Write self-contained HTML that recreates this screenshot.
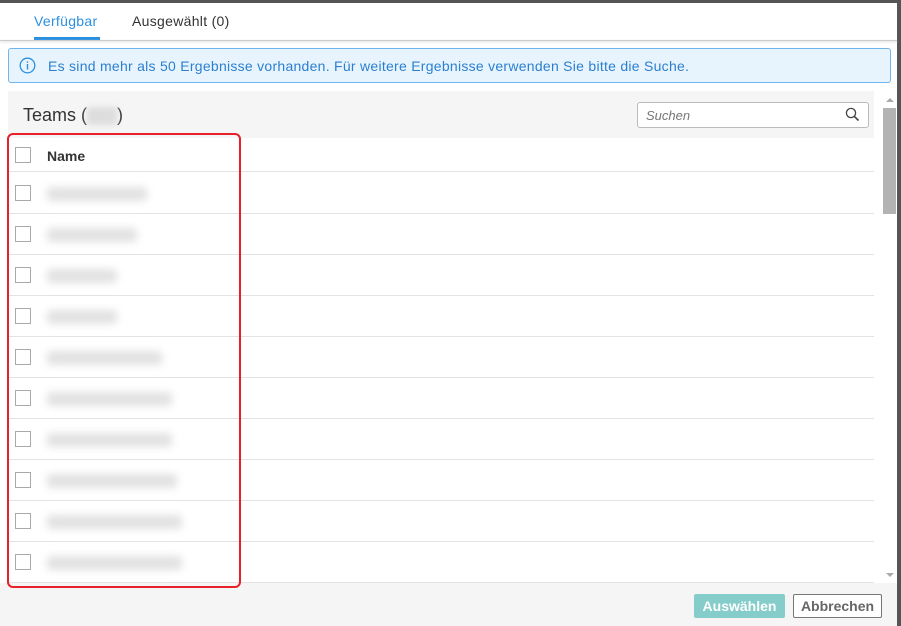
<!DOCTYPE html>
<html><head><meta charset="utf-8"><style>
*{box-sizing:border-box;margin:0;padding:0}
body{width:901px;height:626px;overflow:hidden;background:#fff;font-family:"Liberation Sans",sans-serif;position:relative}
.abs{position:absolute}
.cb{position:absolute;left:15px;width:16px;height:16px;border:1.5px solid #aaa;background:#fff}
.row{position:absolute;left:8px;width:866px;border-bottom:1px solid #e3e3e3}
.bl{position:absolute;left:47px;height:14px;background:#e2e2e2;filter:blur(4px);border-radius:3px}
</style></head><body>
<div class="abs" style="left:0;top:0;width:901px;height:3px;background:#555"></div>
<div class="abs" style="left:897px;top:0;width:4px;height:626px;background:#555"></div>
<div class="abs" style="left:34px;top:13px;font-size:14px;color:#2b8fe0;letter-spacing:0.3px">Verfügbar</div>
<div class="abs" style="left:34px;top:37px;width:66px;height:3px;background:#2b8fe0"></div>
<div class="abs" style="left:132px;top:13px;font-size:14px;color:#333;letter-spacing:0.3px">Ausgewählt (0)</div>
<div class="abs" style="left:0;top:40px;width:897px;height:1px;background:#ccc;box-shadow:0 1px 2px #ccc"></div>
<div class="abs" style="left:8px;top:48px;width:883px;height:35px;background:#e8f4fd;border:1px solid #6fb5ee;border-radius:3px"></div>
<svg class="abs" style="left:19px;top:57px" width="17" height="17" viewBox="0 0 17 17"><circle cx="8.5" cy="8.5" r="7.3" fill="none" stroke="#2b8fe0" stroke-width="1.3"/><rect x="7.8" y="7" width="1.4" height="5.5" fill="#2b8fe0"/><rect x="7.8" y="4.3" width="1.4" height="1.5" fill="#2b8fe0"/></svg>
<div class="abs" style="left:48px;top:58px;font-size:14px;color:#2b7fd0;letter-spacing:0.27px">Es sind mehr als 50 Ergebnisse vorhanden. Für weitere Ergebnisse verwenden Sie bitte die Suche.</div>
<div class="abs" style="left:8px;top:91px;width:866px;height:47px;background:#f5f5f5"></div>
<div class="abs" style="left:23px;top:105px;font-size:18px;color:#333">Teams (<span style="display:inline-block;width:30px;height:18px;background:#ddd;filter:blur(3px);vertical-align:middle"></span>)</div>
<div class="abs" style="left:637px;top:102px;width:232px;height:26px;border:1px solid #bbb;border-radius:3px;background:#fff"></div>
<div class="abs" style="left:646px;top:108px;font-size:13px;font-style:italic;color:#777">Suchen</div>
<svg class="abs" style="left:845px;top:107px" width="15" height="15" viewBox="0 0 15 15"><circle cx="6" cy="6" r="4.6" fill="none" stroke="#444" stroke-width="1.3"/><path d="M9.4 9.4 L13.5 13.5" stroke="#444" stroke-width="1.6"/></svg>
<div class="row" style="top:138px;height:34px"></div>
<div class="cb" style="top:147px"></div>
<div class="abs" style="left:47px;top:148px;font-size:14px;font-weight:bold;color:#333">Name</div>
<div class="row" style="top:172px;height:42px"></div><div class="cb" style="top:185px"></div><div class="bl" style="top:187px;width:100px"></div>
<div class="row" style="top:214px;height:41px"></div><div class="cb" style="top:226px"></div><div class="bl" style="top:228px;width:90px"></div>
<div class="row" style="top:255px;height:41px"></div><div class="cb" style="top:267px"></div><div class="bl" style="top:269px;width:70px"></div>
<div class="row" style="top:296px;height:41px"></div><div class="cb" style="top:308px"></div><div class="bl" style="top:310px;width:70px"></div>
<div class="row" style="top:337px;height:41px"></div><div class="cb" style="top:349px"></div><div class="bl" style="top:351px;width:115px"></div>
<div class="row" style="top:378px;height:41px"></div><div class="cb" style="top:390px"></div><div class="bl" style="top:392px;width:125px"></div>
<div class="row" style="top:419px;height:41px"></div><div class="cb" style="top:431px"></div><div class="bl" style="top:433px;width:125px"></div>
<div class="row" style="top:460px;height:41px"></div><div class="cb" style="top:472px"></div><div class="bl" style="top:474px;width:130px"></div>
<div class="row" style="top:501px;height:41px"></div><div class="cb" style="top:513px"></div><div class="bl" style="top:515px;width:135px"></div>
<div class="row" style="top:542px;height:41px"></div><div class="cb" style="top:554px"></div><div class="bl" style="top:556px;width:135px"></div>
<div class="abs" style="left:883px;top:108px;width:13px;height:106px;background:#b3b3b3"></div>
<div class="abs" style="left:886px;top:98px;width:0;height:0;border-left:4px solid transparent;border-right:4px solid transparent;border-bottom:4px solid #aaa"></div>
<div class="abs" style="left:886px;top:573px;width:0;height:0;border-left:4px solid transparent;border-right:4px solid transparent;border-top:4px solid #aaa"></div>
<div class="abs" style="left:0;top:583px;width:897px;height:43px;background:#f5f5f5"></div>
<div class="abs" style="left:694px;top:594px;width:91px;height:24px;background:#85cdca;border-radius:2px;color:#fff;font-weight:bold;font-size:14px;text-align:center;line-height:24px">Auswählen</div>
<div class="abs" style="left:793px;top:594px;width:89px;height:24px;border:1px solid #777;border-radius:2px;background:#fff;color:#666;font-weight:bold;font-size:14px;text-align:center;line-height:22px">Abbrechen</div>
<div class="abs" style="left:7px;top:133px;width:234px;height:455px;border:2px solid #e8202a;border-radius:6px"></div>
</body></html>
